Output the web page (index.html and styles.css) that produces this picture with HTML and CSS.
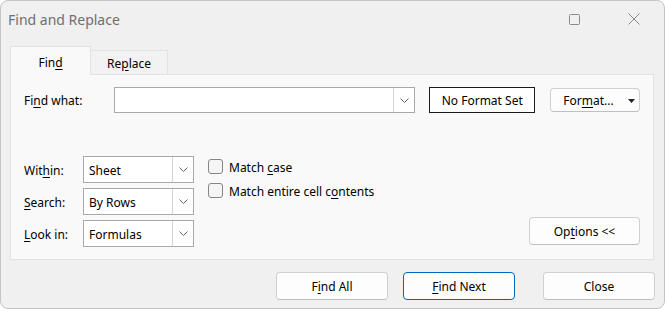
FILE: index.html
```html
<!DOCTYPE html>
<html lang="en">
<head>
    <meta charset="UTF-8">
    <title>Find and Replace</title>
    <link rel="stylesheet" href="styles.css">
</head>
<body>
    <div class="window">
        <div class="titlebar">
            <div class="title">Find and Replace</div>
            <div class="caption-btn">
                <svg width="11" height="11" viewBox="0 0 11 11"><rect x="0.5" y="0.5" width="10" height="10" rx="1" fill="none" stroke="#8a8a8a"/></svg>
            </div>
            <div class="caption-btn">
                <svg width="12" height="12" viewBox="0 0 12 12"><path d="M0.5 0.5 L11.5 11.5 M11.5 0.5 L0.5 11.5" stroke="#8a8a8a" stroke-width="1"/></svg>
            </div>
        </div>

        <div class="tabs">
            <div class="tab active"><span>Fin<u>d</u></span></div>
            <div class="tab"><span>Re<u>p</u>lace</span></div>
        </div>

        <div class="panel">
            <div class="find-row">
                <label class="label find-label">Fi<u>n</u>d what:</label>
                <div class="combo find-combo">
                    <div class="combo-text"></div>
                    <div class="combo-arrow">
                        <svg width="9" height="5" viewBox="0 0 9 5"><path d="M0.5 0.5 L4.5 4.5 L8.5 0.5" fill="none" stroke="#666"/></svg>
                    </div>
                </div>
                <div class="format-box">No Format Set</div>
                <div class="btn format-btn">
                    <span>For<u>m</u>at...</span>
                    <svg class="caret" width="7" height="4" viewBox="0 0 7 4"><path d="M0 0 H7 L3.5 4 Z" fill="#222"/></svg>
                </div>
            </div>

            <div class="lower">
                <div class="options-grid">
                    <label class="label">Wit<u>h</u>in:</label>
                    <div class="combo">
                        <div class="combo-text">Sheet</div>
                        <div class="combo-arrow">
                            <svg width="9" height="5" viewBox="0 0 9 5"><path d="M0.5 0.5 L4.5 4.5 L8.5 0.5" fill="none" stroke="#666"/></svg>
                        </div>
                    </div>
                    <label class="label"><u>S</u>earch:</label>
                    <div class="combo">
                        <div class="combo-text">By Rows</div>
                        <div class="combo-arrow">
                            <svg width="9" height="5" viewBox="0 0 9 5"><path d="M0.5 0.5 L4.5 4.5 L8.5 0.5" fill="none" stroke="#666"/></svg>
                        </div>
                    </div>
                    <label class="label"><u>L</u>ook in:</label>
                    <div class="combo">
                        <div class="combo-text">Formulas</div>
                        <div class="combo-arrow">
                            <svg width="9" height="5" viewBox="0 0 9 5"><path d="M0.5 0.5 L4.5 4.5 L8.5 0.5" fill="none" stroke="#666"/></svg>
                        </div>
                    </div>
                </div>

                <div class="checks">
                    <div class="check-item"><span class="checkbox"></span><span class="check-text">Match <u>c</u>ase</span></div>
                    <div class="check-item"><span class="checkbox"></span><span class="check-text">Match entire cell c<u>o</u>ntents</span></div>
                </div>

                <div class="btn options-btn"><span>Op<u>t</u>ions &lt;&lt;</span></div>
            </div>
        </div>

        <div class="footer">
            <div class="btn footer-btn"><span>F<u>i</u>nd All</span></div>
            <div class="btn footer-btn default"><span><u>F</u>ind Next</span></div>
            <div class="btn footer-btn close-btn"><span>Close</span></div>
        </div>
    </div>
</body>
</html>
```

FILE: styles.css
```css
body {
    margin: 0;
    background: #ffffff;
    font-family: 'Segoe UI', 'Noto Sans', sans-serif;
    font-size: 12px;
    color: #000;
}
u {
    text-underline-offset: 2px;
}
.window {
    width: 665px;
    height: 309px;
    box-sizing: border-box;
    border: 1px solid #c4c4c4;
    border-radius: 8px;
    background: #f0f0f0;
    overflow: hidden;
}
.titlebar {
    height: 36px;
    display: flex;
    align-items: center;
    padding-left: 7px;
}
.title {
    flex: 1;
    font-size: 14px;
    color: #6f6f6f;
}
.caption-btn {
    width: 60px;
    height: 36px;
    display: flex;
    align-items: center;
    justify-content: center;
}

/* tab strip */
.tabs {
    display: flex;
    align-items: flex-end;
    padding-left: 9px;
    margin-top: 9px;
    height: 28px;
}
.tab {
    box-sizing: border-box;
    height: 24px;
    padding: 1px 21px 0;
    border: 1px solid #e2e2e2;
    border-bottom: none;
    background: #f2f2f2;
    display: flex;
    align-items: center;
    justify-content: center;
}
.tab.active {
    height: 29px;
    width: 81px;
    background: #f9f9f9;
    position: relative;
    z-index: 1;
    margin-bottom: -1px;
    padding-top: 2px;
    padding-bottom: 0;
}
.tab + .tab {
    border-left: none;
    width: 77px;
}

/* main panel */
.panel {
    box-sizing: border-box;
    height: 186px;
    margin: 0 10px 0 9px;
    border: 1px solid #e2e2e2;
    background: #f9f9f9;
    padding: 12px 13px 0 13px;
}
.find-row {
    display: flex;
    align-items: center;
    height: 26px;
}
.find-label {
    width: 90px;
}
.combo {
    box-sizing: border-box;
    height: 27px;
    border: 1px solid #a9a9a9;
    background: #fff;
    display: flex;
}
.find-combo {
    width: 302px;
    height: 26px;
}
.combo-text {
    flex: 1;
    display: flex;
    align-items: center;
    padding: 1px 0 0 5px;
}
.combo-arrow {
    width: 20px;
    border-left: 1px solid #d4d4d4;
    display: flex;
    align-items: center;
    justify-content: center;
}
.format-box {
    box-sizing: border-box;
    width: 106px;
    height: 26px;
    margin-left: 14px;
    border: 1px solid #1a1a1a;
    background: #fff;
    display: flex;
    align-items: center;
    justify-content: center;
}
.btn {
    box-sizing: border-box;
    border: 1px solid #d0d0d0;
    border-bottom-color: #bfbfbf;
    border-radius: 4px;
    background: #fdfdfd;
    display: flex;
    align-items: center;
    justify-content: center;
    padding-top: 1px;
}
.format-btn {
    width: 90px;
    height: 24px;
    margin-left: 15px;
    gap: 14px;
    padding-left: 8px;
}
.caret {
    margin-top: 1px;
}

.lower {
    display: flex;
    margin-top: 43px;
}
.options-grid {
    display: grid;
    grid-template-columns: 59px 111px;
    row-gap: 5px;
    align-items: center;
}
.options-grid .label {
    padding-top: 1px;
}
.checks {
    margin-left: 14px;
    padding-top: 3px;
    display: flex;
    flex-direction: column;
    gap: 9px;
}
.check-item {
    display: flex;
    align-items: center;
    height: 15px;
    gap: 6px;
}
.check-text {
    padding-top: 2px;
}
.checkbox {
    box-sizing: border-box;
    width: 15px;
    height: 15px;
    border: 1px solid #858585;
    border-radius: 3px;
    background: #f5f5f5;
}
.options-btn {
    width: 111px;
    height: 28px;
    margin-left: auto;
    align-self: flex-end;
    margin-bottom: 2px;
}

/* dialog buttons */
.footer {
    display: flex;
    justify-content: flex-end;
    padding-right: 9px;
    margin-top: 12px;
    gap: 15px;
}
.footer-btn {
    width: 112px;
    height: 28px;
}
.footer-btn.default {
    border-color: #0067c0;
}
.footer-btn.close-btn {
    margin-left: 13px;
}
```
